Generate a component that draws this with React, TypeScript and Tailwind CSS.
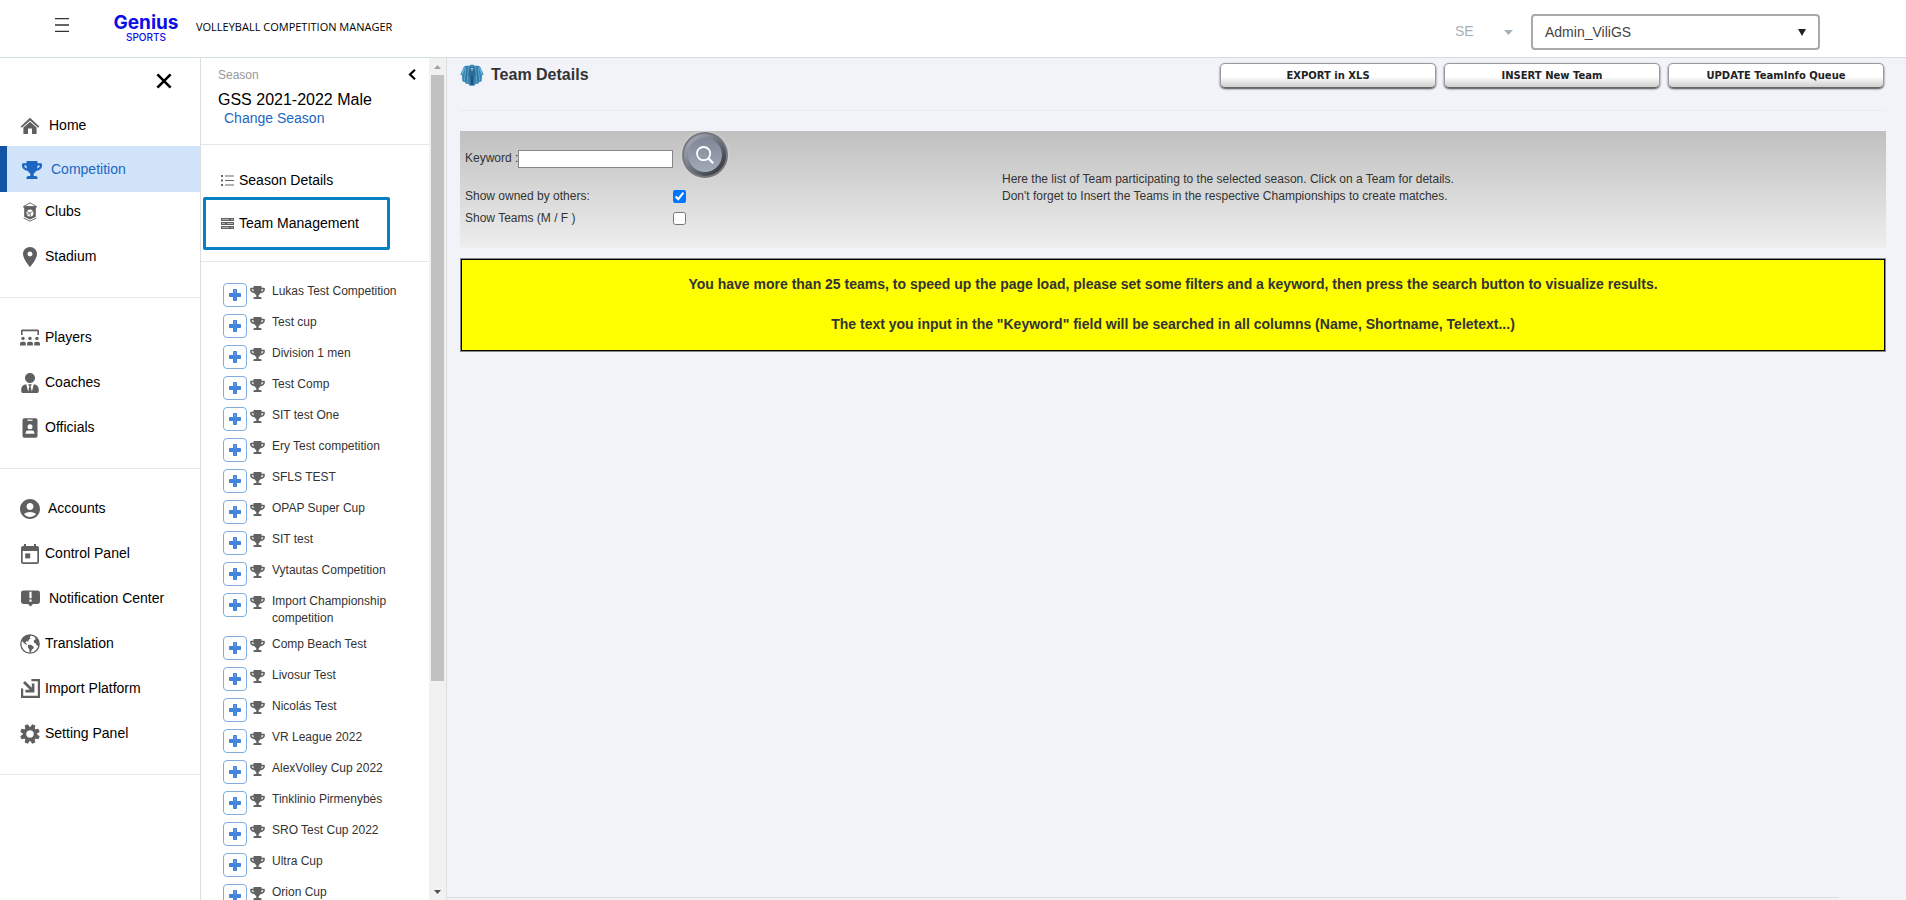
import clsx from 'clsx';
import { useState } from 'react';
import type { ReactNode } from 'react';
import { FaTrophy, FaUserTie } from 'react-icons/fa';
import { MdAccountCircle, MdLocationOn } from 'react-icons/md';

interface IMenuItem {
	label: string;
	icon: ReactNode;
	gap?: string;
	active?: boolean;
}

const HomeIcon = () => (
	<svg viewBox="0 0 20 18" className="w-5 h-[18px]" fill="currentColor">
		<path d="M10 0.8 L19.4 9.4 L18.2 10.7 L10 3.4 L1.8 10.7 L0.6 9.4 Z" />
		<path d="M10 4.8 L16.6 10.6 V17 H12 V11.6 H8 V17 H3.4 V10.6 Z" />
	</svg>
);

const ClubIcon = () => (
	<svg viewBox="0 0 16 20" className="w-4 h-5" fill="none" stroke="currentColor">
		<path d="M2 4.2 L8 0.8 L14 4.2" strokeWidth="0.9" />
		<path d="M1.2 4.8 H14.8" strokeWidth="1.4" />
		<path d="M2.2 5 H13.8 V14.8 L8 17.4 L2.2 14.8 Z" fill="currentColor" stroke="none" />
		<path d="M1.6 16 L8 19.2 L14.4 16" strokeWidth="0.9" />
		<circle cx="8" cy="11" r="3.5" fill="#fff" stroke="none" />
		<path d="M8 11 L5 9.6 M8 11 L11 9 M8 11 L8.4 14.2 M5 12.4 L8 11.4" strokeWidth="0.8" />
	</svg>
);

const PlayersIcon = () => (
	<svg viewBox="0 0 20 17" className="w-5 h-[17px]" fill="currentColor">
		<path d="M1 6 V2 Q1 0.6 2.4 0.6 H17.6 Q19 0.6 19 2 V6 H17.4 V2.3 H2.6 V6 Z" />
		<circle cx="3" cy="9.4" r="1.7" />
		<circle cx="10" cy="9.4" r="1.7" />
		<circle cx="17" cy="9.4" r="1.7" />
		<path d="M0 16.4 V14.6 Q0 12.8 2 12.8 H4 Q5.8 12.8 5.8 14.6 V16.4 Z" />
		<path d="M7.1 16.4 V14.6 Q7.1 12.8 9 12.8 H11 Q12.9 12.8 12.9 14.6 V16.4 Z" />
		<path d="M14.2 16.4 V14.6 Q14.2 12.8 16 12.8 H18 Q20 12.8 20 14.6 V16.4 Z" />
	</svg>
);

const OfficialsIcon = () => (
	<svg viewBox="0 0 16 20" className="w-4 h-5" fill="currentColor">
		<rect x="0.5" y="0.2" width="15" height="19.6" rx="1.8" />
		<rect x="5.5" y="1.6" width="5" height="1.2" fill="#fff" />
		<circle cx="8" cy="8.8" r="2.5" fill="#fff" />
		<path d="M3.6 15.8 V15 Q3.6 12.6 6 12.6 H10 Q12.4 12.6 12.4 15 V15.8 Z" fill="#fff" />
	</svg>
);

const CalendarIcon = () => (
	<svg viewBox="0 0 18 20" className="w-[18px] h-5" fill="currentColor">
		<path
			fillRule="evenodd"
			d="M3 0 H5 V2 H13 V0 H15 V2 H16 Q18 2 18 4 V18 Q18 20 16 20 H2 Q0 20 0 18 V4 Q0 2 2 2 H3 Z M1.7 7 V18.2 H16.3 V7 Z"
		/>
		<rect x="4.2" y="9.4" width="5" height="5" />
	</svg>
);

const NoticeIcon = () => (
	<svg viewBox="0 0 19 17" className="w-[19px] h-[17px]" fill="currentColor">
		<path d="M2.4 0.6 H16.6 Q19 0.6 19 3 V11.6 Q19 14 16.6 14 H12 L9.5 16.6 L7 14 H2.4 Q0 14 0 11.6 V3 Q0 0.6 2.4 0.6 Z" />
		<path d="M8.4 1.8 H10.6 V8.2 H8.4 Z M8.4 9.6 H10.6 V11.8 H8.4 Z" fill="#fff" />
	</svg>
);

const GlobeIcon = () => (
	<svg viewBox="0 0 20 20" className="w-5 h-5" fill="currentColor">
		<circle cx="10" cy="10" r="9.2" fill="none" stroke="currentColor" strokeWidth="1.3" />
		<path d="M1.4 7 C2.4 3.6 5.4 1 9 0.8 L11 1.6 L9.8 3.2 L10.6 4.4 L9 5.6 L8 7.6 L6.2 7.2 L5.4 8.8 L7.4 10.4 L6.8 11 L4 9.2 L2.6 7.6 Z" />
		<path d="M8 11 L10.8 10.8 L13.8 12.8 L13.2 14.8 L11.8 15.8 L10.8 18.6 L9.6 18.4 L9.2 15.2 L7.8 13.2 Z" />
		<path d="M14.4 2 L18.8 6.8 L19 12 L16.8 11.6 L15.8 9.4 L14 8.8 L13.8 6.6 L15.6 5.2 Z" />
	</svg>
);

const ImportIcon = () => (
	<svg viewBox="0 0 19 19" className="w-[19px] h-[19px]" fill="currentColor">
		<path d="M10.4 0 H19 V19 H0 V9.6 H2.2 V16.8 H16.8 V2.2 H10.4 Z" />
		<path d="M4 2 L10.8 8.8 V4.4 H13.4 V13.4 H4.4 V10.8 H8.8 L2 4 Z" />
	</svg>
);

const GearIcon = () => (
	<svg viewBox="-10 -10 20 20" className="w-5 h-5">
		<g fill="currentColor">
			{[22.5, 67.5, 112.5, 157.5, 202.5, 247.5, 292.5, 337.5].map((angle) => (
				<path key={angle} transform={`rotate(${angle})`} d="M-2.4 -6 L-1.7 -9.8 H1.7 L2.4 -6 Z" />
			))}
		</g>
		<circle r="5.5" fill="none" stroke="currentColor" strokeWidth="3.4" />
	</svg>
);

const ListIcon = () => (
	<svg viewBox="0 0 13 11" className="w-[13px] h-[11px]" fill="currentColor">
		<path d="M0 0 H2 V2 H0 Z M0 4.5 H2 V6.5 H0 Z M0 9 H2 V11 H0 Z" />
		<path d="M4 0.4 H13 V1.6 H4 Z M4 4.9 H13 V6.1 H4 Z M4 9.4 H13 V10.6 H4 Z" />
	</svg>
);

const ServerIcon = () => (
	<svg viewBox="0 0 13 11" className="w-[13px] h-[11px]">
		<path d="M0 0 H13 V3 H0 Z M0 4 H13 V7 H0 Z M0 8 H13 V11 H0 Z" fill="#5f5f5f" />
		<path d="M1 1.5 H8 M10 1.5 H12 M1 5.5 H4 M6 5.5 H12 M1 9.5 H8 M10 9.5 H12" stroke="#c8c8c8" strokeWidth="0.8" />
	</svg>
);

const PlusIcon = () => (
	<svg viewBox="0 0 12 12" className="w-3 h-3">
		<defs>
			<linearGradient id="plus" x1="0" y1="0" x2="0" y2="1">
				<stop offset="0" stopColor="#6fa9ee" />
				<stop offset="0.5" stopColor="#3c82de" />
				<stop offset="1" stopColor="#4a93ea" />
			</linearGradient>
		</defs>
		<path d="M4.5 0.5 H7.5 V4.5 H11.5 V7.5 H7.5 V11.5 H4.5 V7.5 H0.5 V4.5 H4.5 Z" fill="url(#plus)" stroke="#447fd2" />
	</svg>
);

const TeamIcon = () => (
	<svg viewBox="0 0 24 22" className="w-6 h-[22px]">
		<path
			d="M4 2.4 L7 1.4 L9 2 L10.4 0.8 H13.6 L15 2 L17 1.4 L20 2.4 L23.6 10.6 L22 11.6 L21.6 17.4 L19 18 L18.6 19.4 L15.4 20 L14.4 21.8 H9.6 L8.6 20 L5.4 19.4 L5 18 L2.4 17.4 L2 11.6 L0.4 10.6 Z"
			fill="#3a86b4"
		/>
		<path d="M4.6 3.4 L2 10.4 M19.4 3.4 L22 10.4" stroke="#62b4de" strokeWidth="1.4" />
		<path d="M6 4 L4.4 16.6 M18 4 L19.6 16.6 M8.4 3 L7 18 M15.6 3 L17 18" stroke="#5aa9d2" />
		<path d="M7.2 4 L5.8 17 M16.8 4 L18.2 17" stroke="#245f88" strokeWidth="0.8" />
		<path d="M9.6 4 Q12 2 14.4 4 L16 12 L14.2 13 L14 21 H10 L9.8 13 L8 12 Z" fill="#2b6d99" />
		<path d="M11.1 4 L12 7.6 L12.9 4 Z" fill="#cfe3ee" />
		<path d="M12 12 V21" stroke="#1a4566" />
	</svg>
);

const menuGroups: IMenuItem[][] = [
	[
		{ label: 'Home', icon: <HomeIcon />, gap: 'gap-[7px]' },
		{ label: 'Competition', icon: <FaTrophy className="w-5 h-[18px]" />, gap: 'gap-[7px]', active: true },
		{ label: 'Clubs', icon: <ClubIcon /> },
		{ label: 'Stadium', icon: <MdLocationOn className="w-6 h-6" /> },
	],
	[
		{ label: 'Players', icon: <PlayersIcon /> },
		{ label: 'Coaches', icon: <FaUserTie className="w-[18px] h-5" /> },
		{ label: 'Officials', icon: <OfficialsIcon /> },
	],
	[
		{ label: 'Accounts', icon: <MdAccountCircle className="w-6 h-6" />, gap: 'gap-[6px]' },
		{ label: 'Control Panel', icon: <CalendarIcon /> },
		{ label: 'Notification Center', icon: <NoticeIcon />, gap: 'gap-[7px]' },
		{ label: 'Translation', icon: <GlobeIcon /> },
		{ label: 'Import Platform', icon: <ImportIcon /> },
		{ label: 'Setting Panel', icon: <GearIcon /> },
	],
];

const competitions = [
	'Lukas Test Competition',
	'Test cup',
	'Division 1 men',
	'Test Comp',
	'SIT test One',
	'Ery Test competition',
	'SFLS TEST',
	'OPAP Super Cup',
	'SIT test',
	'Vytautas Competition',
	'Import Championship competition',
	'Comp Beach Test',
	'Livosur Test',
	'Nicolás Test',
	'VR League 2022',
	'AlexVolley Cup 2022',
	'Tinklinio Pirmenybės',
	'SRO Test Cup 2022',
	'Ultra Cup',
	'Orion Cup',
];

const actions = ['EXPORT in XLS', 'INSERT New Team', 'UPDATE TeamInfo Queue'];

function Header() {
	return (
		<header className="flex items-start shrink-0 h-[58px] bg-white border-b border-[#d3dfde]">
			<button type="button" aria-label="Menu" className="mt-[17px] ml-[54px]">
				<svg viewBox="0 0 16 16" className="w-4 h-4" stroke="#333" strokeWidth="1.4">
					<path d="M1 1.6 H15 M1 8 H15 M1 14.4 H15" />
				</svg>
			</button>
			<a
				href="#"
				className="flex flex-col items-center w-16 mt-3.5 ml-[44px] font-['Inter'] text-[#0c0ce6]"
			>
				<span className="text-[19px] leading-[18px] font-bold">Genius</span>
				<span className="text-[10px] leading-[10px] font-medium">SPORTS</span>
			</a>
			<span className="mt-[18px] ml-[18px] font-['Open_Sans'] text-[11px] leading-[18px] text-black">
				VOLLEYBALL COMPETITION MANAGER
			</span>
			<div className="flex items-start ml-auto mr-[86px] mt-[14px]">
				<div className="relative mr-[18px]">
					<select
						aria-label="Country"
						className="w-[58px] h-[35px] appearance-none bg-transparent text-[14px] text-[#a5b1b8]"
					>
						<option>SE</option>
					</select>
					<svg viewBox="0 0 9 5" className="absolute right-0 top-[16px] w-[9px] h-[5px] pointer-events-none">
						<path d="M0 0 H9 L4.5 5 Z" fill="#a5b1b8" />
					</svg>
				</div>
				<div className="relative">
					<select
						aria-label="User"
						className="w-[289px] h-9 pl-3 appearance-none bg-white border-2 border-[#aaa] rounded text-[14px] text-[#444]"
					>
						<option>Admin_ViliGS</option>
					</select>
					<svg viewBox="0 0 8 7" className="absolute right-[14px] top-[15px] w-2 h-[7px] pointer-events-none">
						<path d="M0 0 H8 L4 7 Z" fill="#222" />
					</svg>
				</div>
			</div>
		</header>
	);
}

function Sidebar() {
	return (
		<nav className="w-[201px] shrink-0 bg-white border-r border-[#dcdfe0]">
			<div className="flex justify-end h-[45px] pr-7">
				<button type="button" aria-label="Close menu">
					<svg viewBox="0 0 16 16" className="w-4 h-4" stroke="#000" strokeWidth="2.6">
						<path d="M1.4 1.4 L14.6 14.6 M14.6 1.4 L1.4 14.6" />
					</svg>
				</button>
			</div>
			{menuGroups.map((group, index) => (
				<ul
					key={index}
					className={clsx([index !== 0 && 'pt-[17px]', 'pb-[18px] border-b border-[#e8eaea]'])}
				>
					{group.map((item) => (
						<li key={item.label}>
							<a
								href="#"
								className={clsx([
									'flex items-center text-[14px] leading-5',
									item.gap || 'gap-[3px]',
									item.active
										? 'h-[46px] -mt-0.5 -mb-[3px] pl-[13px] border-l-[7px] border-[#1254a3] bg-[#d2e4fa] text-[#1b66c2]'
										: 'h-[45px] pl-[18px] pb-0.5 text-black',
								])}
							>
								<span
									className={clsx([
										'flex items-center justify-center w-6 h-6 pt-0.5',
										!item.active && 'text-[#5f5f5f]',
									])}
								>
									{item.icon}
								</span>
								{item.label}
							</a>
						</li>
					))}
				</ul>
			))}
		</nav>
	);
}

function SeasonPanel() {
	return (
		<aside className="flex w-[246px] shrink-0 bg-white border-r border-[#dcdfe4]">
			<div className="flex-1 overflow-hidden">
				<div className="flex justify-between h-[87px] pl-[17px] pr-[13px] pt-2 border-b border-[#e6e8e8]">
					<div>
						<div className="text-[12px] leading-[18px] text-[#999]">Season</div>
						<div className="mt-1.5 text-[16px] leading-5 text-black">GSS 2021-2022 Male</div>
						<a href="#" className="block pl-1.5 text-[14px] leading-4 text-[#1b66c2]">
							Change Season
						</a>
					</div>
					<button type="button" aria-label="Collapse panel" className="self-start mt-[3px]">
						<svg viewBox="0 0 8 11" className="w-2 h-[11px]" fill="none" stroke="#000" strokeWidth="2.2">
							<path d="M7 0.8 L2 5.5 L7 10.2" />
						</svg>
					</button>
				</div>
				<div className="h-[117px] pt-[13px] pl-0.5 text-[14px] leading-5 text-black border-b border-[#e6e8e8]">
					<a href="#" className="flex items-center gap-[5px] h-[39px] pt-2 pl-[18px] pb-1">
						<span className="text-[#666] pt-0.5">
							<ListIcon />
						</span>
						Season Details
					</a>
					<a
						href="#"
						className="flex items-center gap-[5px] w-[187px] h-[53px] pl-[15px] pb-0.5 border-3 border-[#0580c2] rounded-[2px]"
					>
						<span className="pt-0.5">
							<ServerIcon />
						</span>
						Team Management
					</a>
				</div>
				<ul className="pt-[21px] pl-[22px] pr-7">
					{competitions.map((name) => (
						<li key={name} className="flex items-start min-h-[31px]">
							<button
								type="button"
								aria-label={`Expand ${name}`}
								className="flex items-center justify-center w-6 h-6 shrink-0 bg-white border border-[#80ade0] rounded-[4px]"
							>
								<PlusIcon />
							</button>
							<FaTrophy className="w-[15px] h-[13px] mt-[3px] ml-[3px] shrink-0 text-[#626262]" />
							<a href="#" className="pb-[9px] ml-[7px] text-[12px] leading-[17px] text-[#333]">
								{name}
							</a>
						</li>
					))}
				</ul>
			</div>
			<div aria-hidden="true" className="flex flex-col items-center w-[17px] bg-[#f1f1f1]">
				<div className="flex items-center justify-center h-[17px]">
					<svg viewBox="0 0 7 4" className="w-[7px] h-1">
						<path d="M0 4 H7 L3.5 0 Z" fill="#a3a3a3" />
					</svg>
				</div>
				<div className="flex-1 w-[13px]">
					<div className="h-3/4 bg-[#c1c1c1]" />
				</div>
				<div className="flex items-center justify-center h-[17px]">
					<svg viewBox="0 0 7 4" className="w-[7px] h-1">
						<path d="M0 0 H7 L3.5 4 Z" fill="#505050" />
					</svg>
				</div>
			</div>
		</aside>
	);
}

function Filters() {
	const [owned, setOwned] = useState(true);
	const [teams, setTeams] = useState(false);
	return (
		<form
			onSubmit={(e) => e.preventDefault()}
			className="flex h-[117px] mt-5 pl-[5px] text-[12px] leading-[17px] text-[#333] bg-linear-to-b from-[#c0c0c0] to-[#eee]"
		>
			<div className="w-[537px] shrink-0">
				<div className="flex items-center h-12 pt-1">
					<label htmlFor="keyword" className="w-[53px] pt-0.5 whitespace-nowrap">
						Keyword :
					</label>
					<input
						id="keyword"
						type="text"
						className="w-[155px] h-[18px] mt-1 px-0.5 bg-white border border-[#858585]"
					/>
					<button
						type="submit"
						aria-label="Search"
						className="flex items-center justify-center w-[46px] h-[46px] -mt-1 ml-[9px] rounded-full bg-linear-to-br from-[#b4bac6] via-[#6d727d] to-[#2c2c32] border-2 border-[#77797f] shadow-[0_0_2px_#eee]"
					>
						<span className="flex items-center justify-center w-[34px] h-[34px] rounded-full bg-linear-to-b from-[#7f8798] to-[#a3aab8]">
							<svg viewBox="0 0 18 18" className="w-[18px] h-[18px]" fill="none" stroke="#fff" strokeWidth="1.8">
								<circle cx="7.6" cy="7.6" r="6.6" />
								<path d="M12.4 12.4 L17.2 17.2" strokeWidth="2.2" />
							</svg>
						</span>
					</button>
				</div>
				<div className="flex items-center h-[22px] mt-1.5">
					<label htmlFor="owned" className="w-[208px]">
						Show owned by others:
					</label>
					<input
						id="owned"
						type="checkbox"
						checked={owned}
						onChange={(e) => setOwned(e.target.checked)}
						className="w-[13px] h-[13px] accent-[#0075ff]"
					/>
				</div>
				<div className="flex items-center h-[22px]">
					<label htmlFor="teams" className="w-[208px]">
						Show Teams (M / F )
					</label>
					<input
						id="teams"
						type="checkbox"
						checked={teams}
						onChange={(e) => setTeams(e.target.checked)}
						className="w-[13px] h-[13px] accent-[#0075ff]"
					/>
				</div>
			</div>
			<p className="mt-10">
				Here the list of Team participating to the selected season. Click on a Team for details.
				<br />
				Don't forget to Insert the Teams in the respective Championships to create matches.
			</p>
		</form>
	);
}

function App() {
	return (
		<div className="flex flex-col h-screen overflow-hidden font-['Liberation_Sans',sans-serif] bg-white">
			<Header />
			<div className="flex flex-1 min-h-0">
				<Sidebar />
				<SeasonPanel />
				<main className="flex flex-col flex-1 bg-[#f2f3f8]">
					<div className="flex-1 pl-[13px] pr-5">
						<div className="flex items-start h-[53px] border-b border-[#e9ebee]">
							<div className="flex items-center gap-[7px] pt-1.5">
								<TeamIcon />
								<h1 className="text-[16px] leading-[22px] font-bold text-[#333]">Team Details</h1>
							</div>
							<div className="flex gap-2 mt-[5px] mr-0.5 ml-auto">
								{actions.map((action) => (
									<button
										key={action}
										type="button"
										className="w-[216px] h-[25px] font-['DejaVu_Sans'] text-[10px] leading-4 font-bold text-[#222] bg-linear-to-b from-white from-55% to-[#cfcfcf] border border-[#999] border-b-[#666] rounded-[5px] shadow-[0_1px_2px_#444]"
									>
										{action}
									</button>
								))}
							</div>
						</div>
						<Filters />
						<div className="mt-2.5 border border-[#888]">
							<p className="pt-[14px] pb-4 border border-black bg-[#ff0] text-center text-[14px] leading-5 font-bold text-[#333]">
								You have more than 25 teams, to speed up the page load, please set some filters and a
								keyword, then press the search button to visualize results.
								<br />
								<br />
								The text you input in the "Keyword" field will be searched in all columns (Name,
								Shortname, Teletext...)
							</p>
						</div>
					</div>
					<footer className="h-[3px] mr-[67px] border-t border-[#dcdee5]" />
				</main>
			</div>
		</div>
	);
}

export default App;
